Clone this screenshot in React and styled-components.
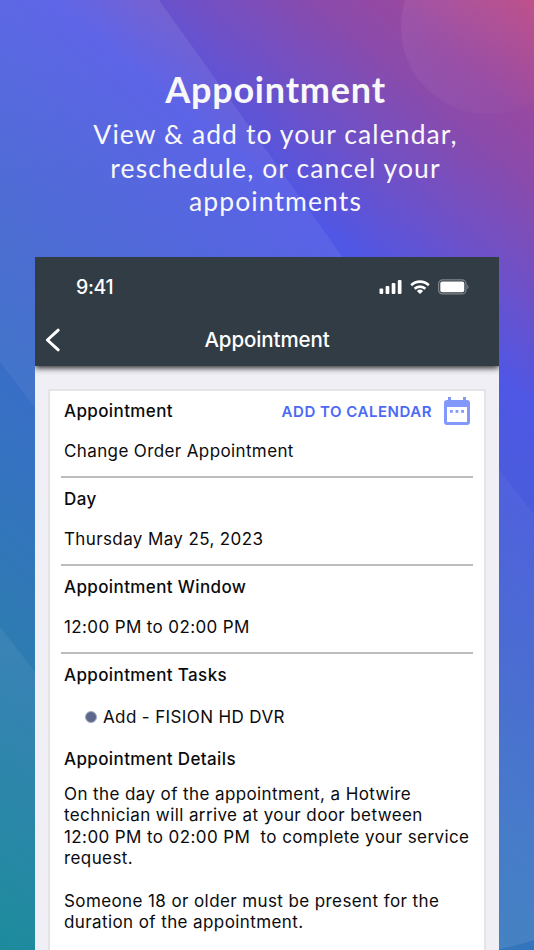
import React from 'react';
import styled, { createGlobalStyle } from 'styled-components';

const GlobalStyle = createGlobalStyle`
  * {
    box-sizing: border-box;
  }

  body {
    margin: 0;
    font-family: Inter, 'Liberation Sans', sans-serif;
  }
`;

const Page = styled.main`
  position: relative;
  display: flex;
  flex-direction: column;
  width: 534px;
  height: 950px;
  overflow: hidden;
  background: linear-gradient(
    40deg,
    #18899a 0%,
    #2e7bb2 23%,
    #3870c6 40%,
    #4063cf 52%,
    #4f57e5 71%,
    #6b51ca 78%,
    #8b4bab 87%,
    #9549a3 91%,
    #bd4c88 100%
  );
`;

const Backdrop = styled.svg`
  position: absolute;
  inset: 0;
`;

const Hero = styled.header`
  position: relative;
  height: 257px;
  padding-top: 67px;
  padding-left: 17px;
  text-align: center;
  color: #f8f8fa;
  font-family: Lato, 'Open Sans', sans-serif;
`;

const HeroTitle = styled.h1`
  margin: 0;
  font-size: 36px;
  font-weight: 700;
  line-height: 44px;
  letter-spacing: 0.8px;
`;

const HeroText = styled.p`
  margin: 7px 0 0;
  font-size: 26.5px;
  font-weight: 400;
  line-height: 33.6px;
  letter-spacing: 1.1px;
`;

const Phone = styled.section`
  position: relative;
  display: flex;
  flex-direction: column;
  flex: 1;
  margin: 0 35px;
  background: #f0eff5;
`;

const TopBar = styled.div`
  position: relative;
  height: 109px;
  background: #323c45;
  color: #fff;
  box-shadow: 0 2px 6px rgba(0, 0, 0, 0.85);
  clip-path: inset(0 0 -14px 0);
`;

const StatusBar = styled.div`
  display: flex;
  align-items: center;
  justify-content: space-between;
  height: 59px;
  padding: 0 30px 0 41px;
`;

const Clock = styled.span`
  font-size: 19.5px;
  font-weight: 550;
  letter-spacing: -0.3px;
`;

const StatusIcons = styled.div`
  display: flex;
  align-items: center;
  gap: 8px;
`;

const NavBar = styled.nav`
  display: grid;
  grid-template-columns: 60px 1fr 60px;
  align-items: center;
  height: 46px;
`;

const BackButton = styled.button`
  display: flex;
  padding: 1px 0 0 10px;
  border: none;
  background: none;
  color: inherit;
`;

const NavTitle = styled.h2`
  margin: 0;
  text-align: center;
  font-size: 20.5px;
  font-weight: 550;
  letter-spacing: -0.1px;
`;

const Card = styled.article`
  flex: 1;
  margin: 23px 13px 0;
  padding: 0 11px;
  border: 2px solid #e4e4e8;
  border-bottom: none;
  background: #fff;
  color: #0b0b0d;
`;

const Field = styled.section`
  height: ${props => props.$height || 88}px;
  padding: 0 3px;
  border-bottom: ${props => (props.$last ? 'none' : '2px solid #bdbdbf')};
`;

const FieldHeader = styled.div`
  display: flex;
  align-items: center;
  justify-content: space-between;
  height: ${props => props.$height || 42}px;
`;

const Label = styled.h3`
  margin: 0;
  font-size: 17px;
  font-weight: 550;
  letter-spacing: 0.38px;
`;

const Value = styled.p`
  margin: 0;
  font-size: 17px;
  line-height: ${props => props.$lineHeight || 38}px;
  letter-spacing: 0.38px;
`;

const CalendarButton = styled.button`
  display: flex;
  align-items: center;
  gap: 12px;
  padding: 0;
  border: none;
  background: none;
  color: #4c69f6;
  font-family: inherit;
  font-size: 15px;
  font-weight: 600;
  letter-spacing: 0.52px;
`;

const TaskList = styled.ul`
  margin: 0;
  padding: 0 0 0 21px;
  list-style: none;
`;

const Task = styled.li`
  display: flex;
  align-items: center;
  gap: 6px;
  height: 42px;
  font-size: 17px;
  letter-spacing: 0.38px;
`;

const Bullet = styled.span`
  width: 12px;
  height: 12px;
  border: 1px solid #a3aac2;
  border-radius: 50%;
  background: #5d688a;
`;

const Details = styled.p`
  margin: 5px 0 0;
  font-size: 17px;
  line-height: 21.4px;
  letter-spacing: 0.4px;
  white-space: nowrap;
`;

const DetailsBlock = styled.div`
  padding: 0 3px;
`;

const SignalIcon = () => (
  <svg width="23" height="14" viewBox="0 0 23 14" fill="#fff">
    <rect x="0.5" y="8.5" width="3.7" height="5.5" rx="1" />
    <rect x="6.6" y="6" width="3.7" height="8" rx="1" />
    <rect x="12.7" y="3" width="3.7" height="11" rx="1" />
    <rect x="18.8" y="0" width="3.7" height="14" rx="1" />
  </svg>
);

const WifiIcon = () => (
  <svg width="20" height="14" viewBox="0 0 20 14" fill="none" stroke="#fff" strokeWidth="2.6">
    <path d="M1.2 5.2a12.6 12.6 0 0 1 17.6 0" />
    <path d="M4.6 8.8a7.7 7.7 0 0 1 10.8 0" />
    <path d="M6.9 11a4.5 4.5 0 0 1 6.2 0L10 14z" fill="#fff" stroke="none" />
  </svg>
);

const BatteryIcon = () => (
  <svg width="31" height="16" viewBox="0 0 31 16">
    <rect x="0.6" y="0.9" width="27.4" height="14" rx="4" fill="none" stroke="#80868c" strokeWidth="1.2" />
    <rect x="2.3" y="2.6" width="24" height="10.6" rx="2" fill="#fff" />
    <path d="M29.3 5.8a2.4 2.4 0 0 1 0 4.2z" fill="#80868c" />
  </svg>
);

const BackIcon = () => (
  <svg width="16" height="24" viewBox="0 0 16 24" fill="none" stroke="#fff" strokeWidth="3" strokeLinecap="round">
    <path d="M13.2 2.2L2.4 12l10.8 9.8" strokeLinejoin="round" />
  </svg>
);

const CalendarIcon = () => (
  <svg width="26" height="28" viewBox="0 0 26 28" fill="#8298fb">
    <path
      fillRule="evenodd"
      d="M4 0h3v3h12V0h3v3h1a3 3 0 0 1 3 3v19a3 3 0 0 1-3 3H3a3 3 0 0 1-3-3V6a3 3 0 0 1 3-3h1zM3 10v15h20V10z"
    />
    <rect x="6" y="13" width="2.8" height="2.8" />
    <rect x="11.6" y="13" width="2.8" height="2.8" />
    <rect x="17.2" y="13" width="2.8" height="2.8" />
  </svg>
);

const fields = [
  { label: 'Day', value: 'Thursday May 25, 2023' },
  { label: 'Appointment Window', value: '12:00 PM to 02:00 PM' },
];

const App = () => (
  <>
    <GlobalStyle />
    <Page>
      <Backdrop width="534" height="950" viewBox="0 0 534 950" fill="#fff">
        <defs>
          <linearGradient id="band" x1="0" y1="0" x2="0" y2="1">
            <stop offset="0" stopColor="#fff" stopOpacity="0.09" />
            <stop offset="0.2" stopColor="#fff" stopOpacity="0.07" />
            <stop offset="0.5" stopColor="#fff" stopOpacity="0.035" />
            <stop offset="1" stopColor="#fff" stopOpacity="0.09" />
          </linearGradient>
          <linearGradient id="corner" x1="0" y1="0" x2="0" y2="1">
            <stop offset="0" stopColor="#fff" stopOpacity="0.06" />
            <stop offset="1" stopColor="#fff" stopOpacity="0.02" />
          </linearGradient>
          <linearGradient id="disc" x1="0" y1="0" x2="1" y2="0.7">
            <stop offset="0" stopColor="#fff" stopOpacity="0.07" />
            <stop offset="1" stopColor="#fff" stopOpacity="0.01" />
          </linearGradient>
        </defs>
        <path d="M0 0H159L346 262L499 469L534 515V940Q516 946 499 949H300L35 408L0 362Z" fill="url(#band)" />
        <path d="M0 627L35 672L250 950H0Z" fill="url(#corner)" />
        <circle cx="488" cy="27" r="87" fill="url(#disc)" />
      </Backdrop>

      <Hero>
        <HeroTitle>Appointment</HeroTitle>
        <HeroText>
          View &amp; add to your calendar,
          <br />
          reschedule, or cancel your
          <br />
          appointments
        </HeroText>
      </Hero>

      <Phone>
        <TopBar>
          <StatusBar>
            <Clock>9:41</Clock>
            <StatusIcons>
              <SignalIcon />
              <WifiIcon />
              <BatteryIcon />
            </StatusIcons>
          </StatusBar>
          <NavBar>
            <BackButton aria-label="Back">
              <BackIcon />
            </BackButton>
            <NavTitle>Appointment</NavTitle>
          </NavBar>
        </TopBar>

        <Card>
          <Field $height={87}>
            <FieldHeader $height={40}>
              <Label>Appointment</Label>
              <CalendarButton>
                ADD TO CALENDAR
                <CalendarIcon />
              </CalendarButton>
            </FieldHeader>
            <Value $lineHeight={40}>Change Order Appointment</Value>
          </Field>

          {fields.map(field => (
            <Field key={field.label}>
              <FieldHeader>
                <Label>{field.label}</Label>
              </FieldHeader>
              <Value>{field.value}</Value>
            </Field>
          ))}

          <Field $last $height={84}>
            <FieldHeader>
              <Label>Appointment Tasks</Label>
            </FieldHeader>
            <TaskList>
              <Task>
                <Bullet />
                Add - FISION HD DVR
              </Task>
            </TaskList>
          </Field>

          <DetailsBlock>
            <FieldHeader $height={41}>
              <Label>Appointment Details</Label>
            </FieldHeader>
            <Details>
              On the day of the appointment, a Hotwire
              <br />
              technician will arrive at your door between
              <br />
              12:00 PM to 02:00 PM&nbsp; to complete your service
              <br />
              request.
              <br />
              <br />
              Someone 18 or older must be present for the
              <br />
              duration of the appointment.
            </Details>
          </DetailsBlock>
        </Card>
      </Phone>
    </Page>
  </>
);

export default App;
